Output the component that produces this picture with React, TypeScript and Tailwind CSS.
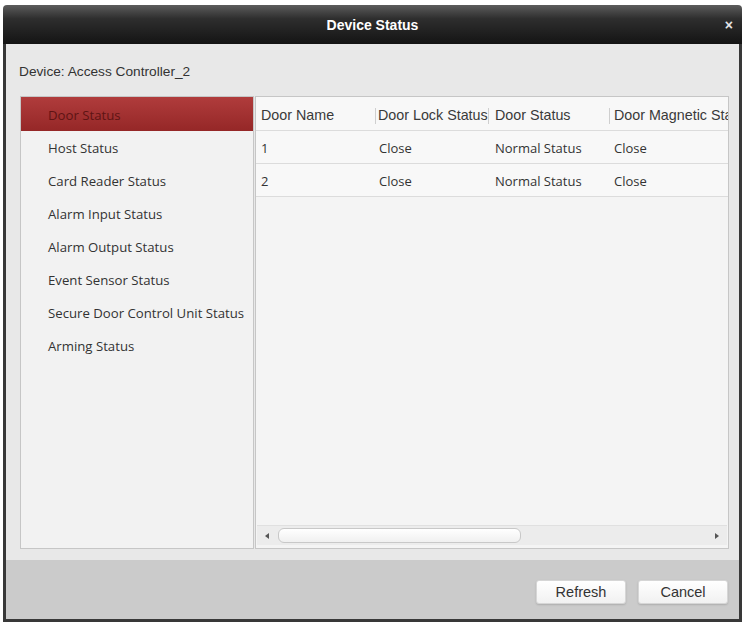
import React from "react";

const items = [
  "Door Status",
  "Host Status",
  "Card Reader Status",
  "Alarm Input Status",
  "Alarm Output Status",
  "Event Sensor Status",
  "Secure Door Control Unit Status",
  "Arming Status",
];

const rows = [
  ["1", "Close", "Normal Status", "Close"],
  ["2", "Close", "Normal Status", "Close"],
];

const human = { fontFamily: '"Open Sans", "Noto Sans", sans-serif' };
const arial = { fontFamily: '"Liberation Sans", Arial, sans-serif' };

export default function App() {
  return (
    <div className="w-[745px] h-[623px] bg-white pt-[5px] pl-[3px] pr-[3px] pb-[1px]" style={arial}>
      <div className="h-full flex flex-col rounded-t-[4px] overflow-hidden">
        {/* Title bar */}
        <div className="relative h-[39px] flex items-center justify-center bg-[linear-gradient(to_bottom,#5c5c5c_0%,#2e2e2e_35%,#141414_100%)]">
          <span className="text-white font-bold text-[14px] leading-none pt-[1px]">Device Status</span>
          <span className="absolute right-[9px] top-[13px] text-[#e6e6e6] font-bold text-[14px] leading-none">×</span>
        </div>
        {/* Body */}
        <div className="flex-1 flex flex-col border-x-[3px] border-b-[3px] border-[#383838]">
          <div className="h-[516px] bg-[#e8e8e8] flex flex-col pl-[14px]">
            <div className="mt-[19px] h-[18px] flex items-center -ml-[1px] text-[13.7px] text-[#333]">
              Device: Access Controller_2
            </div>
            <div className="mt-[15px] flex">
              {/* Left list */}
              <div className="w-[234px] h-[453px] border border-[#c6c6c6] bg-[#f2f2f2] flex flex-col" style={human}>
                {items.map((it, i) =>
                  i === 0 ? (
                    <div
                      key={it}
                      className="h-[34px] flex items-center pl-[27px] pt-[4px] text-[13.2px] text-[#5e1414] bg-[linear-gradient(to_bottom,#b03c3c,#952727)]"
                    >
                      {it}
                    </div>
                  ) : (
                    <div key={it} className="h-[33px] flex items-center pl-[27px] pt-[3px] text-[13.2px] text-[#333]">
                      {it}
                    </div>
                  )
                )}
              </div>
              {/* Right table */}
              <div className="ml-[1px] w-[474px] h-[453px] border border-[#c6c6c6] bg-[#f4f4f4] flex flex-col overflow-hidden">
                <div className="h-[34px] flex items-center pt-[4px] bg-[#f8f8f8] border-b border-[#dcdcdc] text-[14.3px] text-[#3a3a3a] whitespace-nowrap">
                  <div className="w-[119px] pl-[5px] shrink-0">Door Name</div>
                  <div className="w-[1px] h-[16px] bg-[#cfcfcf] shrink-0" />
                  <div className="w-[112px] pl-[2px] shrink-0 overflow-hidden">Door Lock Status</div>
                  <div className="w-[1px] h-[16px] bg-[#cfcfcf] shrink-0" />
                  <div className="w-[120px] pl-[6px] shrink-0">Door Status</div>
                  <div className="w-[1px] h-[16px] bg-[#cfcfcf] shrink-0" />
                  <div className="flex-1 pl-[4px] overflow-hidden">Door Magnetic Status</div>
                </div>
                {rows.map((r, i) => (
                  <div
                    key={i}
                    className="h-[33px] flex items-center pt-[4px] bg-[#f8f8f8] border-b border-[#dcdcdc] text-[13px] text-[#333] whitespace-nowrap"
                    style={human}
                  >
                    <div className="w-[119px] pl-[5px] shrink-0">{r[0]}</div>
                    <div className="w-[1px] shrink-0" />
                    <div className="w-[112px] pl-[3px] shrink-0">{r[1]}</div>
                    <div className="w-[1px] shrink-0" />
                    <div className="w-[120px] pl-[6px] shrink-0">{r[2]}</div>
                    <div className="w-[1px] shrink-0" />
                    <div className="flex-1 pl-[4px]">{r[3]}</div>
                  </div>
                ))}
                <div className="flex-1" />
                {/* Horizontal scrollbar */}
                <div className="h-[20px] mb-[3px] mx-[1px] flex items-center bg-[#ececec] border-t border-[#e0e0e0]">
                  <div className="w-[20px] flex items-center justify-center">
                    <svg width="4" height="6" viewBox="0 0 4 6">
                      <path d="M4 0 L0 3 L4 6 Z" fill="#555" />
                    </svg>
                  </div>
                  <div className="ml-[1px] w-[243px] h-[15px] rounded-[6px] border border-[#c8c8c8] bg-[linear-gradient(to_bottom,#ffffff,#f0f0f0)]" />
                  <div className="flex-1" />
                  <div className="w-[20px] flex items-center justify-center">
                    <svg width="4" height="6" viewBox="0 0 4 6">
                      <path d="M0 0 L4 3 L0 6 Z" fill="#555" />
                    </svg>
                  </div>
                </div>
              </div>
            </div>
          </div>
          {/* Footer */}
          <div className="flex-1 bg-[#cbcbcb] flex justify-end items-start pt-[20px] pr-[11px] gap-[12px]">
            <button className="w-[90px] h-[24px] pt-[2px] rounded-[3px] border border-[#d6d6d6] bg-[linear-gradient(to_bottom,#ffffff,#f1f1f1)] shadow-[0_1px_2px_rgba(0,0,0,0.15)] text-[14.5px] text-[#333] flex items-center justify-center">
              Refresh
            </button>
            <button className="w-[90px] h-[24px] pt-[2px] rounded-[3px] border border-[#d6d6d6] bg-[linear-gradient(to_bottom,#ffffff,#f1f1f1)] shadow-[0_1px_2px_rgba(0,0,0,0.15)] text-[14.5px] text-[#333] flex items-center justify-center">
              Cancel
            </button>
          </div>
        </div>
      </div>
    </div>
  );
}
